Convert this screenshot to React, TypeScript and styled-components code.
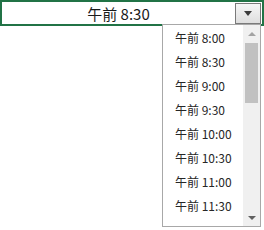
import styled, { createGlobalStyle } from "styled-components";

const GlobalStyle = createGlobalStyle`
  html, body {
    margin: 0;
    padding: 0;
    background: #ffffff;
  }
  body {
    font-family: "Noto Sans CJK JP", "Noto Sans", sans-serif;
  }
`;

const times = [
  "午前 8:00",
  "午前 8:30",
  "午前 9:00",
  "午前 9:30",
  "午前 10:00",
  "午前 10:30",
  "午前 11:00",
  "午前 11:30",
];

const Page = styled.div`
  position: relative;
  width: 264px;
  height: 230px;
`;

const Cell = styled.div`
  box-sizing: border-box;
  width: 264px;
  height: 26px;
  border: 2px solid #217346;
  display: flex;
  align-items: center;
  padding-right: 1px;
`;

const CellText = styled.div`
  flex: 1;
  text-align: center;
  font-size: 15px;
  color: #1a1a1a;
  line-height: 1;
`;

const DropButton = styled.div`
  box-sizing: border-box;
  width: 26px;
  height: 21px;
  border: 1px solid #7a7a7a;
  background: linear-gradient(#f6f6f6, #dedede);
  display: flex;
  align-items: center;
  justify-content: center;
`;

const Triangle = styled.div<{ $up?: boolean; $color: string; $w: number; $h: number }>`
  width: 0;
  height: 0;
  border-left: ${(p) => p.$w}px solid transparent;
  border-right: ${(p) => p.$w}px solid transparent;
  ${(p) =>
    p.$up
      ? `border-bottom: ${p.$h}px solid ${p.$color};`
      : `border-top: ${p.$h}px solid ${p.$color};`}
`;

const List = styled.div`
  position: absolute;
  left: 162px;
  top: 24px;
  box-sizing: border-box;
  width: 99px;
  height: 203px;
  border: 1px solid #a8a8a8;
  background: #ffffff;
  display: flex;
`;

const Items = styled.div`
  flex: 1;
  display: flex;
  flex-direction: column;
`;

const Item = styled.div`
  height: 24px;
  display: flex;
  align-items: center;
  padding-left: 12px;
  font-size: 12px;
  color: #262626;
`;

const Scrollbar = styled.div`
  width: 17px;
  background: #f0f0f0;
  display: flex;
  flex-direction: column;
`;

const ScrollArrow = styled.div`
  height: 17px;
  display: flex;
  align-items: center;
  justify-content: center;
`;

const Track = styled.div`
  flex: 1;
  padding: 0 2px;
`;

const Thumb = styled.div`
  height: 60px;
  margin-top: 1px;
  background: #c1c1c1;
`;

export default function App() {
  return (
    <>
      <GlobalStyle />
      <Page>
        <Cell>
          <CellText>午前 8:30</CellText>
          <DropButton>
            <Triangle $color="#3c3c3c" $w={4} $h={5} />
          </DropButton>
        </Cell>
        <List>
          <Items>
            {times.map((t) => (
              <Item key={t}>{t}</Item>
            ))}
          </Items>
          <Scrollbar>
            <ScrollArrow>
              <Triangle $up $color="#a3a3a3" $w={4} $h={4} />
            </ScrollArrow>
            <Track>
              <Thumb />
            </Track>
            <ScrollArrow>
              <Triangle $color="#606060" $w={4} $h={4} />
            </ScrollArrow>
          </Scrollbar>
        </List>
      </Page>
    </>
  );
}
